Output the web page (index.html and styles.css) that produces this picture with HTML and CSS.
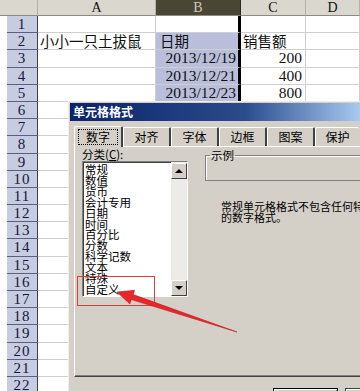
FILE: index.html
```html
<!DOCTYPE html>
<html lang="zh-CN">
<head>
    <meta charset="UTF-8">
    <meta name="viewport" content="width=device-width, initial-scale=1.0">
    <title>单元格格式</title>
    <link rel="stylesheet" href="styles.css">
</head>
<body>
    <div class="sheet">
        <div class="row head">
            <div class="gap"></div><div class="rh"></div><div class="c ca">A</div><div class="c cb">B</div><div class="c cc">C</div><div class="c cd">D</div>
        </div>
        <div class="row"><div class="gap"></div><div class="rh">1</div><div class="c ca"></div><div class="c cb cur"></div><div class="c cc"></div><div class="c cd"></div></div>
        <div class="row"><div class="gap"></div><div class="rh">2</div><div class="c ca cn">小小一只土拔鼠</div><div class="c cb cn">日期</div><div class="c cc cn">销售额</div><div class="c cd"></div></div>
        <div class="row"><div class="gap"></div><div class="rh">3</div><div class="c ca"></div><div class="c cb num">2013/12/19</div><div class="c cc num">200</div><div class="c cd"></div></div>
        <div class="row"><div class="gap"></div><div class="rh">4</div><div class="c ca"></div><div class="c cb num">2013/12/21</div><div class="c cc num">400</div><div class="c cd"></div></div>
        <div class="row"><div class="gap"></div><div class="rh">5</div><div class="c ca"></div><div class="c cb num">2013/12/23</div><div class="c cc num">800</div><div class="c cd"></div></div>
        <div class="row"><div class="gap"></div><div class="rh">6</div><div class="c ca"></div><div class="c cb"></div><div class="c cc"></div><div class="c cd"></div></div>
        <div class="row"><div class="gap"></div><div class="rh">7</div><div class="c ca"></div><div class="c cb"></div><div class="c cc"></div><div class="c cd"></div></div>
        <div class="row"><div class="gap"></div><div class="rh">8</div><div class="c ca"></div><div class="c cb"></div><div class="c cc"></div><div class="c cd"></div></div>
        <div class="row"><div class="gap"></div><div class="rh">9</div><div class="c ca"></div><div class="c cb"></div><div class="c cc"></div><div class="c cd"></div></div>
        <div class="row"><div class="gap"></div><div class="rh">10</div><div class="c ca"></div><div class="c cb"></div><div class="c cc"></div><div class="c cd"></div></div>
        <div class="row"><div class="gap"></div><div class="rh">11</div><div class="c ca"></div><div class="c cb"></div><div class="c cc"></div><div class="c cd"></div></div>
        <div class="row"><div class="gap"></div><div class="rh">12</div><div class="c ca"></div><div class="c cb"></div><div class="c cc"></div><div class="c cd"></div></div>
        <div class="row"><div class="gap"></div><div class="rh">13</div><div class="c ca"></div><div class="c cb"></div><div class="c cc"></div><div class="c cd"></div></div>
        <div class="row"><div class="gap"></div><div class="rh">14</div><div class="c ca"></div><div class="c cb"></div><div class="c cc"></div><div class="c cd"></div></div>
        <div class="row"><div class="gap"></div><div class="rh">15</div><div class="c ca"></div><div class="c cb"></div><div class="c cc"></div><div class="c cd"></div></div>
        <div class="row"><div class="gap"></div><div class="rh">16</div><div class="c ca"></div><div class="c cb"></div><div class="c cc"></div><div class="c cd"></div></div>
        <div class="row"><div class="gap"></div><div class="rh">17</div><div class="c ca"></div><div class="c cb"></div><div class="c cc"></div><div class="c cd"></div></div>
        <div class="row"><div class="gap"></div><div class="rh">18</div><div class="c ca"></div><div class="c cb"></div><div class="c cc"></div><div class="c cd"></div></div>
        <div class="row"><div class="gap"></div><div class="rh">19</div><div class="c ca"></div><div class="c cb"></div><div class="c cc"></div><div class="c cd"></div></div>
        <div class="row"><div class="gap"></div><div class="rh">20</div><div class="c ca"></div><div class="c cb"></div><div class="c cc"></div><div class="c cd"></div></div>
        <div class="row"><div class="gap"></div><div class="rh">21</div><div class="c ca"></div><div class="c cb"></div><div class="c cc"></div><div class="c cd"></div></div>
        <div class="row"><div class="gap"></div><div class="rh">22</div><div class="c ca"></div><div class="c cb"></div><div class="c cc"></div><div class="c cd"></div></div>
    </div>

    <!-- format cells dialog, sits over the sheet -->
    <div class="dialog">
        <div class="title">单元格格式</div>
        <div class="tabs">
            <div class="tab on"><span class="focus">数字</span></div>
            <div class="tab">对齐</div>
            <div class="tab">字体</div>
            <div class="tab">边框</div>
            <div class="tab">图案</div>
            <div class="tab last">保护</div>
        </div>
        <div class="panel">
            <div class="left">
                <div class="lbl">分类(<u>C</u>):</div>
                <div class="list">
                    <div class="items">
                        <div>常规</div>
                        <div>数值</div>
                        <div>货币</div>
                        <div>会计专用</div>
                        <div>日期</div>
                        <div>时间</div>
                        <div>百分比</div>
                        <div>分数</div>
                        <div>科学记数</div>
                        <div>文本</div>
                        <div>特殊</div>
                        <div>自定义</div>
                    </div>
                    <div class="sbar">
                        <div class="sbtn"><i class="up"></i></div>
                        <div class="sbtn"><i class="down"></i></div>
                    </div>
                </div>
            </div>
            <div class="right">
                <fieldset class="sample">
                    <legend>示例</legend>
                    <div class="sample-box"></div>
                </fieldset>
                <div class="desc">常规单元格格式不包含任何特<br>的数字格式。</div>
            </div>
        </div>
        <div class="btns">
            <div class="btn def"></div>
            <div class="btn"></div>
        </div>
    </div>

    <div class="mark"></div>
    <svg class="arrow" width="360" height="391" viewBox="0 0 360 391">
        <polygon points="117,292 134.6,290.3 133.2,294.6 237,332 131.3,299.6 129.8,303.9" fill="#e8262a" stroke="#c0181c" stroke-width="0.6" stroke-linejoin="round"/>
    </svg>
</body>
</html>
```

FILE: styles.css
```css
body {
    margin: 0;
    width: 360px;
    height: 391px;
    overflow: hidden;
    position: relative;
    background-color: #fff;
    font-family: "Liberation Serif", "Noto Sans CJK SC", serif;
    color: #111;
}

/* spreadsheet */
.sheet {
    display: flex;
    flex-direction: column;
    height: 391px;
    overflow: hidden;
}
.row {
    display: flex;
    height: 17.2px;
    flex-shrink: 0;
}
.row > div {
    box-sizing: border-box;
    flex-shrink: 0;
}
.gap {
    width: 7px;
}
.rh {
    width: 31px;
    background-color: #c7cce1;
    border-bottom: 1px solid #56618a;
    border-right: 1px solid #3a4060;
    text-align: center;
    font-size: 15px;
    letter-spacing: 1px;
    line-height: 16px;
    color: #14183a;
}
.c {
    border-right: 1px solid #cfcfcf;
    border-bottom: 1px solid #cfcfcf;
    font-size: 15px;
    line-height: 16px;
    white-space: nowrap;
}
.ca { width: 118px; padding-left: 2px; }
.cb {
    width: 85px;
    background-color: #b9bfda;
    border-right: 3px solid #000;
    padding: 0 2px 0 4px;
}
.cb.cur { background-color: #fff; }
.cc { width: 65px; padding: 0 3px 0 2px; }
.cd { flex: 1; }
.cn {
    font-family: "Noto Sans CJK SC", sans-serif;
    font-size: 14.5px;
    line-height: 16px;
}
.num {
    text-align: right;
    font-size: 15.5px;
}

.row.head {
    height: 16px;
    background-color: #dad7ce;
}
.row.head > div {
    border-bottom: 1px solid #8c8a82;
    border-right: 1px solid #b4b1a8;
    text-align: center;
    font-size: 14px;
    line-height: 15px;
    background-color: #dad7ce;
    padding: 0;
}
.row.head .gap { border-right: none; }
.row.head .cb {
    background-color: #4a4636;
    color: #cfcab6;
    border-right: 1px solid #2c2a20;
}

/* dialog */
.dialog {
    box-sizing: border-box;
    position: absolute;
    left: 68px;
    top: 101px;
    width: 292px;
    height: 290px;
    overflow: hidden;
    background-color: #d4d0c8;
    border-left: 1px solid #efede8;
    border-top: 1px solid #efede8;
    padding: 1px 0 0 1px;
    font-family: "Noto Sans CJK SC", sans-serif;
    color: #000;
}
.title {
    height: 18px;
    background: linear-gradient(to right, #0a246a 0%, #2a4b8c 60%, #a6caf0 100%);
    color: #fff;
    font-weight: bold;
    font-size: 12px;
    line-height: 18px;
    padding-left: 3px;
}
.tabs {
    display: flex;
    align-items: flex-end;
    height: 20px;
    margin: 5px 0 0 4px;
}
.tab {
    box-sizing: border-box;
    width: 48px;
    height: 19px;
    border-top: 1px solid #fff;
    border-left: 1px solid #fff;
    border-right: 2px solid #404040;
    border-radius: 2px 2px 0 0;
    font-size: 12px;
    line-height: 17px;
    text-align: center;
    flex-shrink: 0;
}
.tab.last {
    width: 44px;
    border-right: none;
}
.tab.on {
    width: 49px;
    height: 21px;
    margin-bottom: -1px;
    background-color: #d4d0c8;
    position: relative;
    z-index: 1;
    padding-top: 1px;
}
.focus {
    display: inline-block;
    outline: 1px dotted #000;
    padding: 0 7px;
    line-height: 14px;
}
.panel {
    box-sizing: border-box;
    display: flex;
    height: 231px;
    margin-left: 4px;
    border-top: 1px solid #fff;
    border-left: 1px solid #fff;
    border-bottom: 1px solid #404040;
    box-shadow: inset 0 -1px #808080;
}
.left {
    padding: 1px 0 0 7px;
}
.lbl {
    font-size: 11.5px;
    line-height: 13px;
}
.list {
    box-sizing: border-box;
    display: flex;
    width: 106px;
    height: 136px;
    background-color: #fff;
    border: 1px solid;
    border-color: #808080 #fff #fff #808080;
    box-shadow: inset 1px 1px #404040;
}
.items {
    flex: 1;
    padding: 2px 0 0 2px;
    font-size: 11.5px;
    line-height: 10.9px;
    overflow: hidden;
}
.sbar {
    width: 16px;
    display: flex;
    flex-direction: column;
    justify-content: space-between;
    background-color: #ecebe6;
    padding-top: 1px;
}
.sbtn {
    box-sizing: border-box;
    height: 16px;
    background-color: #d4d0c8;
    border: 1px solid;
    border-color: #fff #404040 #404040 #fff;
    display: flex;
    align-items: center;
    justify-content: center;
}
.up, .down {
    width: 0;
    height: 0;
    border-left: 4px solid transparent;
    border-right: 4px solid transparent;
}
.up { border-bottom: 4px solid #000; }
.down { border-top: 4px solid #000; }

.right {
    flex: 1;
    min-width: 0;
    overflow: hidden;
    margin-left: 17px;
    padding-top: 2px;
}
.sample {
    box-sizing: border-box;
    margin: 0 -4px 0 0;
    padding: 0;
    border: 1px solid #808080;
    border-right: none;
    box-shadow: inset 1px 1px #fff;
}
.sample legend {
    font-size: 11.5px;
    line-height: 12px;
    padding: 0 1px;
    margin-left: 4px;
}
.sample-box {
    height: 19px;
}
.desc {
    margin: 20px 0 0 16px;
    font-size: 11px;
    line-height: 11px;
    white-space: nowrap;
}
.btns {
    display: flex;
    gap: 7px;
    margin: 11px 0 0 203px;
}
.btn {
    box-sizing: border-box;
    width: 65px;
    height: 23px;
    flex-shrink: 0;
    border: 1px solid #404040;
    box-shadow: inset 1px 1px #fff, inset -1px -1px #808080;
}
.btn.def {
    border-color: #000;
}

/* annotations over the screenshot */
.mark {
    position: absolute;
    left: 77px;
    top: 276px;
    width: 76px;
    height: 28px;
    border: 1px solid #d84040;
}
.arrow {
    position: absolute;
    left: 0;
    top: 0;
}
```
